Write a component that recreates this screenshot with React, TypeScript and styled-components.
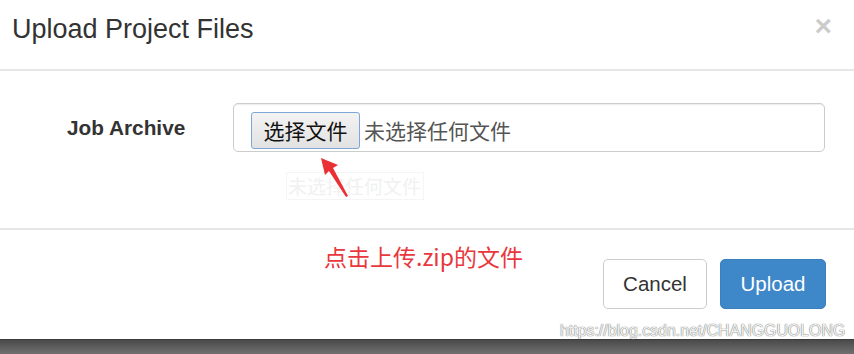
import React from "react";
import styled, { createGlobalStyle } from "styled-components";

const Global = createGlobalStyle`
  html, body { margin: 0; padding: 0; background: #fff; }
  body { width: 854px; height: 354px; overflow: hidden; font-family: "Liberation Sans", Arial, "Noto Sans CJK SC", sans-serif; color: #333; }
  * { box-sizing: border-box; }
`;

const Modal = styled.div`
  position: relative;
  width: 854px;
  height: 354px;
  display: flex;
  flex-direction: column;
  background: #fff;
`;

const Header = styled.div`
  height: 71px;
  display: flex;
  justify-content: space-between;
  align-items: flex-start;
  padding: 9px 22px 0 12px;
  border-bottom: 2px solid #e6e6e6;
`;

const Title = styled.h4`
  margin: 0;
  font-size: 27px;
  line-height: 40px;
  font-weight: 400;
  color: #333;
`;

const Close = styled.button`
  border: 0;
  background: none;
  padding: 0;
  margin-top: -3px;
  font-family: "Liberation Sans", Arial, sans-serif;
  font-size: 30px;
  font-weight: 700;
  line-height: 40px;
  color: #000;
  opacity: 0.2;
`;

const Body = styled.div`
  position: relative;
  height: 157px;
  padding: 32px 29px 0 67px;
`;

const FormRow = styled.div`
  display: grid;
  grid-template-columns: 166px 1fr;
  align-items: center;
`;

const Label = styled.label`
  font-size: 20.8px;
  font-weight: 700;
  color: #333;
`;

const FileInput = styled.div`
  height: 49px;
  display: flex;
  align-items: center;
  padding-left: 17px;
  border: 1.5px solid #ccc;
  border-radius: 5px;
  box-shadow: inset 0 1px 1px rgba(0, 0, 0, 0.075);
  font-family: "Noto Sans CJK SC", sans-serif;
`;

const ChooseButton = styled.span`
  height: 37px;
  width: 109px;
  display: flex;
  align-items: center;
  justify-content: center;
  border: 1.5px solid #7ea6d6;
  border-radius: 3px;
  background: linear-gradient(#f3f3f3, #e2e2e2);
  font-size: 21px;
  color: #111;
  margin-top: 5px;
`;

const NoFile = styled.span`
  margin-left: 4px;
  margin-top: 5px;
  font-size: 21px;
  color: #555;
`;

const Ghost = styled.div`
  position: absolute;
  left: 286px;
  top: 101px;
  width: 138px;
  height: 28px;
  border: 1px solid #f5f5f5;
  font-family: "Noto Sans CJK SC", sans-serif;
  font-size: 19px;
  line-height: 26px;
  padding-left: 1px;
  color: #f1f1f1;
  white-space: nowrap;
`;

const Arrow = styled.svg`
  position: absolute;
  left: 300px;
  top: 80px;
`;

const Footer = styled.div`
  position: relative;
  height: 111px;
  border-top: 2px solid #e6e6e6;
  display: flex;
  justify-content: flex-end;
  align-items: flex-start;
  gap: 13px;
  padding: 29px 28px 0 0;
`;

const Note = styled.div`
  position: absolute;
  left: 324px;
  top: 11px;
  font-family: "Noto Sans CJK SC", sans-serif;
  font-size: 23px;
  line-height: 30px;
  color: #e8383d;
`;

const Btn = styled.button<{ $primary?: boolean }>`
  height: 50px;
  width: ${(p) => (p.$primary ? "106px" : "104px")};
  border-radius: 5px;
  font-family: "Liberation Sans", Arial, sans-serif;
  font-size: 20.5px;
  border: 1.5px solid ${(p) => (p.$primary ? "#3a7fbe" : "#ccc")};
  background: ${(p) => (p.$primary ? "#3e87c8" : "#fff")};
  color: ${(p) => (p.$primary ? "#fff" : "#333")};
  padding: 0;
`;

const Shade = styled.div`
  height: 15px;
  border-top: 1px solid #3c3c3c;
  background: linear-gradient(#4a4a4a, #707070);
`;

const Watermark = styled.div`
  position: absolute;
  left: 560px;
  top: 322px;
  font-family: "Liberation Sans", Arial, sans-serif;
  font-size: 15.9px;
  color: #f2f2f2;
  text-shadow: 0 0 1px #7a7a7a, 0 0 1px #7a7a7a;
  white-space: nowrap;
`;

export default function App() {
  return (
    <>
      <Global />
      <Modal>
        <Header>
          <Title>Upload Project Files</Title>
          <Close>×</Close>
        </Header>
        <Body>
          <FormRow>
            <Label>Job Archive</Label>
            <FileInput>
              <ChooseButton>选择文件</ChooseButton>
              <NoFile>未选择任何文件</NoFile>
            </FileInput>
          </FormRow>
          <Ghost>未选择任何文件</Ghost>
          <Arrow width="60" height="50" viewBox="0 0 60 50">
            <polygon points="21,7 38,14 33,17 48,45 46,46 29,20 25,24" fill="#ea2f35" />
          </Arrow>
        </Body>
        <Footer>
          <Note>点击上传.zip的文件</Note>
          <Btn>Cancel</Btn>
          <Btn $primary>Upload</Btn>
        </Footer>
        <Shade />
        <Watermark>https://blog.csdn.net/CHANGGUOLONG</Watermark>
      </Modal>
    </>
  );
}
